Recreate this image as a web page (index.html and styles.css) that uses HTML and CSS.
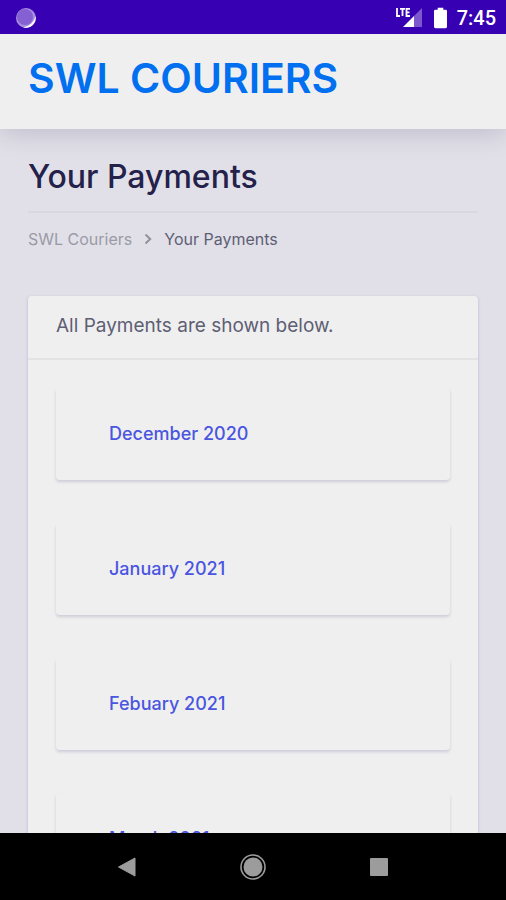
FILE: index.html
```html
<!DOCTYPE html>
<html lang="en">
<head>
  <meta charset="utf-8">
  <meta name="viewport" content="width=device-width, initial-scale=1">
  <title>Your Payments</title>
  <link rel="stylesheet" href="styles.css">
</head>
<body>
  <div class="status-bar">
    <svg class="sync-icon" viewBox="0 0 20 20" aria-hidden="true">
      <circle cx="10" cy="10" r="10" fill="#a88fdf"/>
      <path d="M19.500 8A10 10 0 0 1 7 19.500A14 14 0 0 0 19.500 8Z" fill="#fff"/>
      <circle cx="9" cy="9" r="8" fill="#8460d3"/>
    </svg>
    <div class="status-right">
      <svg class="signal-icon" viewBox="0 0 26 21" aria-hidden="true">
        <path d="M26 1V20H18V9Z" fill="#7d57ce"/>
        <path d="M18 9V20H7Z" fill="#fff"/>
        <path d="M1 1V9H4M4 1.800H9M6.500 1.800V9M14 1.800H10.500V9H14M10.500 5.400H13.500" fill="none" stroke="#fff" stroke-width="1.800"/>
      </svg>
      <svg class="battery-icon" viewBox="0 0 14 22" aria-hidden="true">
        <path d="M4 0H10V2H12.500Q14 2 14 3.500V20.500Q14 22 12.500 22H1.500Q0 22 0 20.500V3.500Q0 2 1.500 2H4Z" fill="#fff"/>
      </svg>
      <time class="clock">7:45</time>
    </div>
  </div>

  <div class="page">
    <header class="site-header">
      <a class="brand" href="#">SWL COURIERS</a>
    </header>

    <main class="content">
      <h1 class="title">Your Payments</h1>
      <nav class="breadcrumb" aria-label="Breadcrumb">
        <a class="crumb-link" href="#">SWL Couriers</a>
        <svg class="chevron" viewBox="0 0 8 12" aria-hidden="true">
          <path d="M1.500 1.500L6.200 6L1.500 10.500" fill="none" stroke="#91919f" stroke-width="2"/>
        </svg>
        <span>Your Payments</span>
      </nav>

      <section class="panel">
        <p class="panel-head">All Payments are shown below.</p>
        <div class="months">
          <a class="month" href="#">December 2020</a>
          <a class="month" href="#">January 2021</a>
          <a class="month" href="#">Febuary 2021</a>
          <a class="month" href="#">March 2021</a>
        </div>
      </section>
    </main>
  </div>

  <nav class="system-nav" aria-label="System">
    <button class="nav-button" aria-label="Back">
      <svg viewBox="0 0 28 28"><path d="M5.500 14L22 5V23Z" fill="#9c9c9c" stroke="#9c9c9c" stroke-linejoin="round"/></svg>
    </button>
    <button class="nav-button" aria-label="Home">
      <svg viewBox="0 0 28 28"><circle cx="14" cy="14" r="12" fill="none" stroke="#9c9c9c" stroke-width="1.600"/><circle cx="14" cy="14" r="9.500" fill="#9c9c9c"/></svg>
    </button>
    <button class="nav-button" aria-label="Overview">
      <svg viewBox="0 0 28 28"><rect x="5" y="5" width="18" height="18" rx="1" fill="#9c9c9c"/></svg>
    </button>
  </nav>
</body>
</html>
```
FILE: styles.css
```css
* {
  box-sizing: border-box;
}

body {
  margin: 0;
  height: 100vh;
  display: flex;
  flex-direction: column;
  overflow: hidden;
  background: #e1e0e8;
  color: #5e5e74;
  font-family: Inter, "Liberation Sans", sans-serif;
  font-size: 16px;
}

a {
  text-decoration: none;
}

.status-bar {
  flex: none;
  display: flex;
  align-items: center;
  justify-content: space-between;
  height: 34px;
  padding: 1px 10px 0 16px;
  background: #3700b3;
}

.sync-icon {
  width: 20px;
  height: 20px;
}

.status-right {
  display: flex;
  align-items: center;
}

.signal-icon {
  width: 26px;
  height: 21px;
  margin-right: 12px;
}

.battery-icon {
  width: 13px;
  height: 22px;
  margin-right: 10px;
}

.clock {
  color: #fff;
  font: 500 20px/24px Roboto, sans-serif;
}

.page {
  flex: 1;
  min-height: 0;
  overflow: hidden;
}

.site-header {
  padding: 16px 28px 23px;
  background: #efefef;
  box-shadow: 0 4px 24px rgba(50, 45, 90, 0.2);
}

.brand {
  display: block;
  color: #0070f0;
  font-size: 41px;
  font-weight: 600;
  line-height: 56px;
  white-space: nowrap;
}

.content {
  padding: 28px 28px 0;
}

.title {
  margin: 0;
  padding-bottom: 14px;
  border-bottom: 2px solid #d9d8df;
  color: #24214a;
  font-size: 32px;
  font-weight: 500;
  line-height: 40px;
}

.breadcrumb {
  display: flex;
  align-items: center;
  gap: 12px;
  padding-top: 14px;
  line-height: 24px;
}

.crumb-link {
  color: #9a9aa6;
}

.chevron {
  width: 8px;
  height: 12px;
}

.panel {
  margin-top: 45px;
  border-radius: 4px;
  background: #efefef;
  box-shadow: 0 1px 3px rgba(60, 55, 140, 0.25);
}

.panel-head {
  margin: 0;
  padding: 16px 28px 18px;
  border-bottom: 2px solid #e3e3e6;
  font-size: 19px;
  line-height: 28px;
}

.months {
  display: grid;
  gap: 43px;
  padding: 28px;
}

.month {
  padding: 32px 53px;
  border-radius: 4px;
  box-shadow: 0 2px 3px rgba(60, 55, 120, 0.18);
  color: #4a55e0;
  font-size: 18px;
  font-weight: 500;
  line-height: 28px;
}

.system-nav {
  flex: none;
  display: flex;
  justify-content: center;
  gap: 98px;
  padding: 20px 0 19px;
  background: #000;
}

.nav-button {
  display: block;
  width: 28px;
  height: 28px;
  padding: 0;
  border: 0;
  background: none;
}

.nav-button svg {
  display: block;
}
```
